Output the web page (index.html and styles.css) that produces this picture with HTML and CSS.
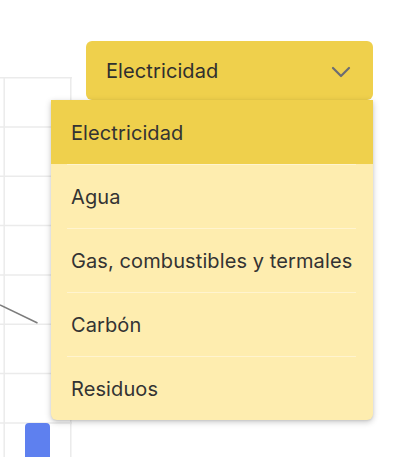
FILE: index.html
```html
<!DOCTYPE html>
<html lang="es">
<head>
<meta charset="utf-8">
<link rel="stylesheet" href="styles.css">
</head>
<body>
<div class="page">
  <svg class="chart" width="72" height="380" viewBox="0 0 72 380">
    <g stroke="#ebebeb" stroke-width="1.5" fill="none">
      <line x1="0" y1="0.75" x2="72" y2="0.75"/>
      <line x1="0" y1="50" x2="72" y2="50"/>
      <line x1="0" y1="99.3" x2="72" y2="99.3"/>
      <line x1="0" y1="148.6" x2="72" y2="148.6"/>
      <line x1="0" y1="197.9" x2="72" y2="197.9"/>
      <line x1="0" y1="247.3" x2="72" y2="247.3"/>
      <line x1="0" y1="296.6" x2="72" y2="296.6"/>
      <line x1="0" y1="346" x2="72" y2="346"/>
      <line x1="4.2" y1="0" x2="4.2" y2="380"/>
      <line x1="70.8" y1="0" x2="70.8" y2="380"/>
    </g>
    <line x1="0" y1="228" x2="37.5" y2="246" stroke="#7c7c7c" stroke-width="1.5"/>
    <rect x="25" y="346" width="25" height="60" rx="4" fill="#5e80ef"/>
  </svg>

  <div class="select">
    <div class="select-button">
      <span class="select-value">Electricidad</span>
      <svg class="chevron" width="20" height="12" viewBox="0 0 20 12">
        <path d="M2 2 L10 10 L18 2" fill="none" stroke="#6b6c73" stroke-width="2.2" stroke-linecap="round" stroke-linejoin="round"/>
      </svg>
    </div>
    <ul class="menu">
      <li class="menu-item selected">Electricidad</li>
      <li class="menu-item">Agua</li>
      <li class="menu-item">Gas, combustibles y termales</li>
      <li class="menu-item">Carbón</li>
      <li class="menu-item">Residuos</li>
    </ul>
  </div>
</div>
</body>
</html>
```
FILE: styles.css
```css
* { box-sizing: border-box; }
html, body {
  margin: 0;
  padding: 0;
  background: #ffffff;
  font-family: Inter, "Noto Sans", sans-serif;
  color: #333333;
}
.page {
  position: relative;
  width: 411px;
  height: 457px;
  overflow: hidden;
}
.chart {
  display: block;
  margin-top: 77px;
}
.select {
  position: absolute;
  top: 41px;
  left: 51px;
  width: 322px;
}
.select-button {
  margin-left: 35px;
  height: 59px;
  background: #efd04c;
  border-radius: 6px;
  display: flex;
  align-items: center;
  justify-content: space-between;
  padding: 0 22px 0 20px;
  font-size: 20px;
  letter-spacing: 0.1px;
  color: #2f2f2f;
}
.chevron { display: block; margin-top: 2px; }
.menu {
  list-style: none;
  margin: 0;
  padding: 0;
  background: #feedaf;
  border-radius: 0 0 6px 6px;
  box-shadow: 0 2px 6px rgba(0, 0, 0, 0.22), 0 1px 2px rgba(0,0,0,0.08);
  overflow: hidden;
}
.menu-item {
  position: relative;
  height: 64px;
  display: flex;
  align-items: center;
  padding-left: 20px;
  padding-top: 1px;
  font-size: 20px;
  letter-spacing: 0.1px;
  color: #333333;
}
.menu-item + .menu-item::before {
  content: "";
  position: absolute;
  top: 0;
  left: 16px;
  right: 17px;
  height: 1px;
  background: #fff4cf;
}
.menu-item.selected {
  background: #efd04c;
}
```
